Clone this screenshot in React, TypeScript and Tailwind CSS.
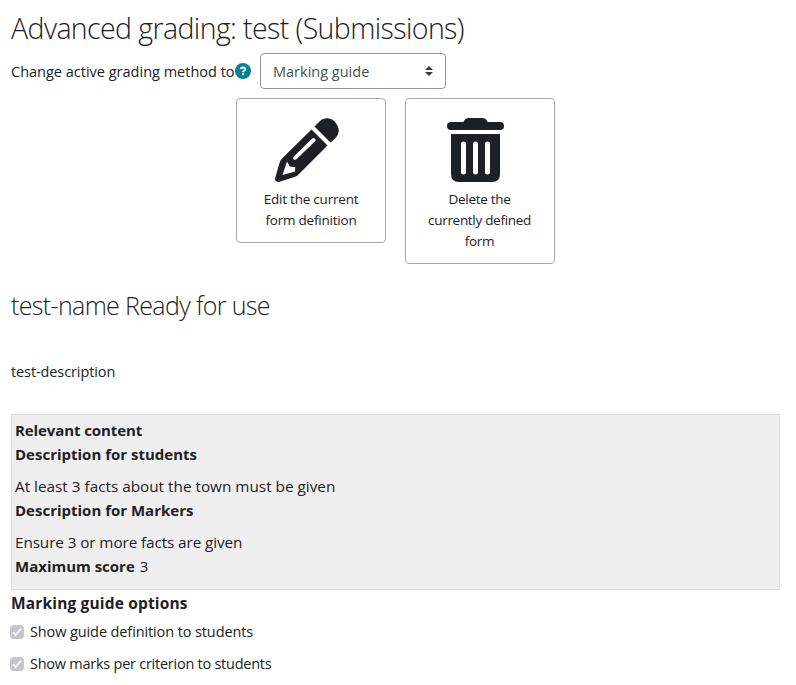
import React, { useState } from 'react';

const PencilIcon = () => (
  <svg viewBox="0 0 64 64" className="h-16 w-16" fill="#1d2125">
    <path d="M39.500 8.500 44.500 3.500C49-.8 55-1 59.500 3.500 65 9 65 15.500 60.500 20L55.500 24.500Z" />
    <path
      fillRule="evenodd"
      d="M36.500 11.500 52.500 27.500 25 55Q22.500 58 19.500 59L4.500 63.700C1.500 64.600-.6 62.500.3 59.500L4.500 45Q5.500 41.500 8 39.500ZM40 20.700Q38.300 19.400 36.700 20.900L19 38.300Q17.500 39.800 18.500 41.200 20 42.500 21.700 40.900L39.800 23.500Q41.300 22 40 20.700ZM12 43.500 7.500 57 20 53.500 20.300 49.300 14.800 48.500Z"
    />
  </svg>
);

const TrashIcon = () => (
  <svg viewBox="0 0 57 64" className="h-16 w-[57px]" fill="#1d2125">
    <path d="M4 4H16.500Q18 0 21.500 0H35.500Q39 0 40.500 4H53A4 4 0 0 1 53 12H4A4 4 0 0 1 4 4Z" />
    <path
      fillRule="evenodd"
      d="M4 16H53V56Q53 64 45 64H12Q4 64 4 56ZM14 26V54A2.500 2.500 0 0 0 19 54V26A2.500 2.500 0 0 0 14 26ZM26 26V54A2.500 2.500 0 0 0 31 54V26A2.500 2.500 0 0 0 26 26ZM38 26V54A2.500 2.500 0 0 0 43 54V26A2.500 2.500 0 0 0 38 26Z"
    />
  </svg>
);

const HelpIcon = () => (
  <svg viewBox="0 0 16 16" className="ml-px h-4 w-4">
    <circle cx="8" cy="8" r="8" fill="#008196" />
    <path d="M5.800 6.100C5.900 3.900 10.200 3.900 10.200 6.200 10.200 7.800 8 7.700 8 9.200" fill="none" stroke="#fff" strokeWidth="1.900" />
    <rect x="7" y="10.200" width="2" height="2" fill="#fff" />
  </svg>
);

const options = [
  { id: 'definition', label: 'Show guide definition to students', tracking: 'tracking-[-0.11px]' },
  { id: 'marks', label: 'Show marks per criterion to students', tracking: 'tracking-[-0.25px]' },
];

const App: React.FC = () => {
  const [method, setMethod] = useState('guide');

  return (
    <div className="h-[685px] overflow-hidden bg-white pr-4 pl-[11px] font-['Open_Sans','Noto_Sans',sans-serif] text-[15px] text-[#1d2125]">
      <h2 className="pt-2.5 text-[28.5px] leading-9 font-light tracking-[-0.6px]">Advanced grading: test (Submissions)</h2>

      <div className="mt-[7px] flex h-9 items-center">
        <label htmlFor="method" className="w-[223px] pt-0.5 text-[14.5px] whitespace-nowrap">Change active grading method to</label>
        <HelpIcon />
        <div className="relative ml-[9px]">
          <select
            id="method"
            value={method}
            onChange={(e) => setMethod(e.target.value)}
            className="h-9 w-[186px] appearance-none rounded border border-[#8f959e] bg-white px-3 pt-0.5 text-[14.5px] text-[#495057]"
          >
            <option value="guide">Marking guide</option>
            <option value="rubric">Rubric</option>
          </select>
          <svg viewBox="0 0 8 10" className="pointer-events-none absolute top-[13px] right-[13px] h-2.5 w-2" fill="#343a40">
            <path d="M4 0 8 4H0ZM0 6H8L4 10Z" />
          </svg>
        </div>
      </div>

      <div className="mt-[9px] ml-[225px] flex h-[166px] items-start gap-[19px] text-center text-[13.5px] leading-[21px]">
        <button className="flex h-[145px] w-[150px] flex-col items-center rounded border border-[#aaa] pt-[19px]">
          <span className="mr-2"><PencilIcon /></span>
          <span className="mt-[7px] w-[104px] tracking-[-0.22px]">Edit the current form definition</span>
        </button>
        <button className="flex h-[166px] w-[150px] flex-col items-center rounded border border-[#aaa] pt-[19px]">
          <span className="mr-[9px]"><TrashIcon /></span>
          <span className="mt-[7px] mr-px w-[114px] tracking-[-0.3px]">Delete the currently defined form</span>
        </button>
      </div>

      <h3 className="mt-[23px] text-[25px] leading-9 font-light tracking-[-0.64px]">test-name Ready for use</h3>
      <p className="mt-[37px] h-[23px] text-[14.5px] leading-[23px] tracking-[-0.1px]">test-description</p>

      <div className="mt-[31px] h-[176px] w-[769px] border border-[#dedede] bg-[#efefef] px-[3px] pt-[3px] leading-6">
        <div className="font-bold tracking-[-0.1px]">Relevant content</div>
        <div className="font-bold">Description for students</div>
        <div className="mt-2 text-[15.3px]">At least 3 facts about the town must be given</div>
        <div className="font-bold">Description for Markers</div>
        <div className="mt-2 text-[15.3px] tracking-[-0.1px]">Ensure 3 or more facts are given</div>
        <div><span className="font-bold">Maximum score</span> <span className="ml-px">3</span></div>
      </div>

      <div className="mt-px text-[15.5px] leading-6 font-bold tracking-[0.16px]">Marking guide options</div>
      {options.map((option) => (
        <div key={option.id} className="-ml-px flex h-8 items-center text-[14.5px]">
          <span className="mt-0.5 flex h-3.5 w-3.5 items-center justify-center rounded-sm bg-[#c5c5cb]">
            <svg viewBox="0 0 14 14" className="h-3.5 w-3.5" fill="none" stroke="#f4f4f6" strokeWidth="2">
              <path d="M2.800 7.300 5.600 10 11.200 3.600" />
            </svg>
          </span>
          <span className={`ml-1.5 pt-0.5 ${option.tracking}`}>{option.label}</span>
        </div>
      ))}
    </div>
  );
};

export default App;
